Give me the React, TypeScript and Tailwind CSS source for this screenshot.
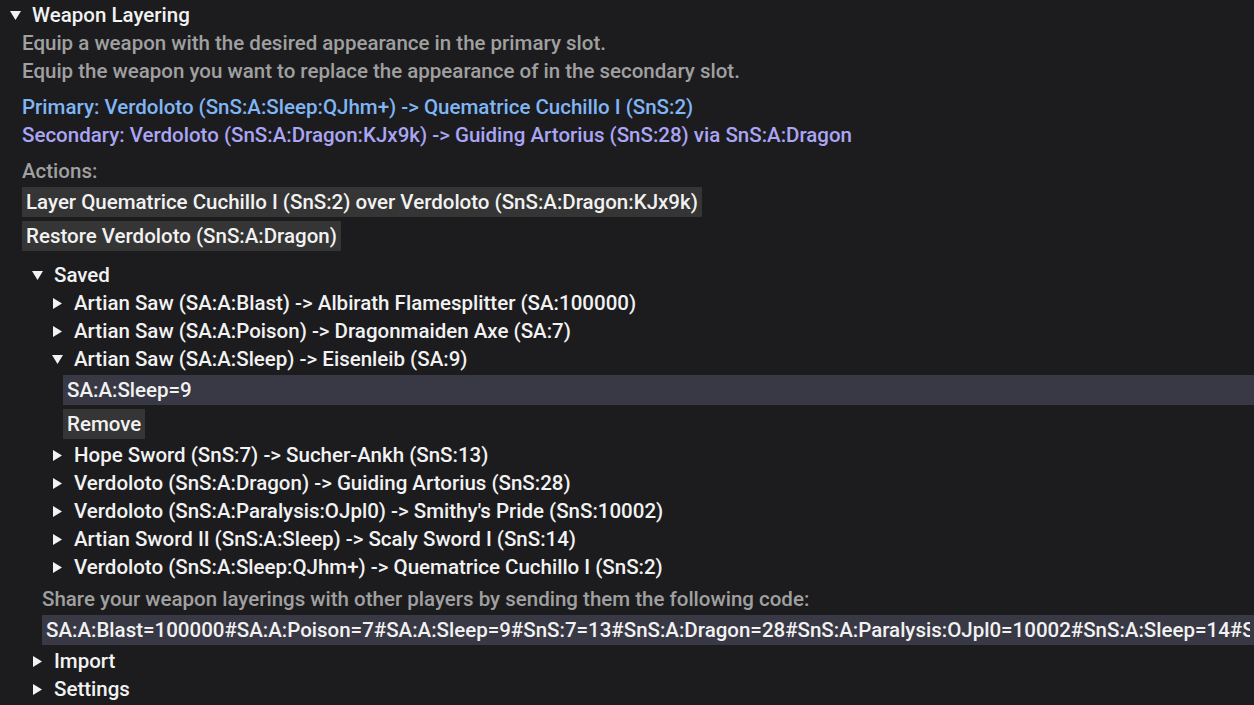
import React from 'react';

// Disclosure triangle, drawn so it looks the same everywhere
const Caret: React.FC<{ open?: boolean }> = ({ open }) => (
  <span className="w-[22px] h-[28px] flex items-center shrink-0">
    {open ? (
      <svg width="11" height="9" viewBox="0 0 11 9">
        <polygon points="0,0 11,0 5.5,9" fill="#f2f2f2" />
      </svg>
    ) : (
      <svg width="9" height="11" viewBox="0 0 9 11" className="ml-px">
        <polygon points="0,0 9,5.5 0,11" fill="#f2f2f2" />
      </svg>
    )}
  </span>
);

const Summary: React.FC<{ open?: boolean; children: React.ReactNode }> = ({ open, children }) => (
  <div className="flex items-center h-[28px] pl-[10px] text-[#f2f2f2] whitespace-nowrap">
    <Caret open={open} />
    <span>{children}</span>
  </div>
);

const Btn: React.FC<{ children: React.ReactNode }> = ({ children }) => (
  <div>
    <button className="h-[30px] px-[4px] bg-[#353535] text-[#f2f2f2] whitespace-nowrap">{children}</button>
  </div>
);

const Field: React.FC<{ value: string }> = ({ value }) => (
  <input
    readOnly
    value={value}
    className="block w-full h-[30px] px-[4px] bg-[#393945] text-[#f2f2f2] outline-none"
  />
);

const saved = [
  'Artian Saw (SA:A:Blast) -> Albirath Flamesplitter (SA:100000)',
  'Artian Saw (SA:A:Poison) -> Dragonmaiden Axe (SA:7)',
  'Artian Saw (SA:A:Sleep) -> Eisenleib (SA:9)',
  'Hope Sword (SnS:7) -> Sucher-Ankh (SnS:13)',
  'Verdoloto (SnS:A:Dragon) -> Guiding Artorius (SnS:28)',
  'Verdoloto (SnS:A:Paralysis:OJpl0) -> Smithy\'s Pride (SnS:10002)',
  'Artian Sword II (SnS:A:Sleep) -> Scaly Sword I (SnS:14)',
  'Verdoloto (SnS:A:Sleep:QJhm+) -> Quematrice Cuchillo I (SnS:2)',
];

const code =
  'SA:A:Blast=100000#SA:A:Poison=7#SA:A:Sleep=9#SnS:7=13#SnS:A:Dragon=28#SnS:A:Paralysis:OJpl0=10002#SnS:A:Sleep=14#SnS:A:Sleep:QJhm+=2';

export default function App() {
  return (
    <div
      className="w-[1254px] h-[705px] overflow-hidden bg-[#1c1c1f] text-[20.5px] leading-[28px] font-medium pt-px"
      style={{ fontFamily: 'Roboto, "Noto Sans", sans-serif' }}
    >
      <Summary open>Weapon Layering</Summary>
      <div className="pl-[22px]">
        <div className="text-[#a0a0a0]">
          <div>Equip a weapon with the desired appearance in the primary slot.</div>
          <div>Equip the weapon you want to replace the appearance of in the secondary slot.</div>
        </div>
        <div className="mt-[8px] whitespace-nowrap">
          <div className="text-[#80b6f4]">Primary: Verdoloto (SnS:A:Sleep:QJhm+) -&gt; Quematrice Cuchillo I (SnS:2)</div>
          <div className="text-[#aaa6f4]">
            Secondary: Verdoloto (SnS:A:Dragon:KJx9k) -&gt; Guiding Artorius (SnS:28) via SnS:A:Dragon
          </div>
        </div>
        <div className="mt-[8px] text-[#a0a0a0]">Actions:</div>
        <div className="flex flex-col gap-[4px] mt-[2px]">
          <Btn>Layer Quematrice Cuchillo I (SnS:2) over Verdoloto (SnS:A:Dragon:KJx9k)</Btn>
          <Btn>Restore Verdoloto (SnS:A:Dragon)</Btn>
        </div>

        <div className="mt-[10px]">
          <Summary open>Saved</Summary>
          <div className="pl-[20px]">
            {saved.map((s, i) =>
              i === 2 ? (
                <div key={s}>
                  <Summary open>{s}</Summary>
                  <div className="pl-[21px] flex flex-col gap-[4px] pt-[2px] pb-[2px]">
                    <Field value="SA:A:Sleep=9" />
                    <Btn>Remove</Btn>
                  </div>
                </div>
              ) : (
                <Summary key={s}>{s}</Summary>
              )
            )}
            <div className="mt-[4px] text-[#a0a0a0] whitespace-nowrap">
              Share your weapon layerings with other players by sending them the following code:
            </div>
            <div className="mt-[2px] mb-[2px]">
              <Field value={code} />
            </div>
          </div>
          <Summary>Import</Summary>
          <Summary>Settings</Summary>
        </div>
      </div>
    </div>
  );
}
